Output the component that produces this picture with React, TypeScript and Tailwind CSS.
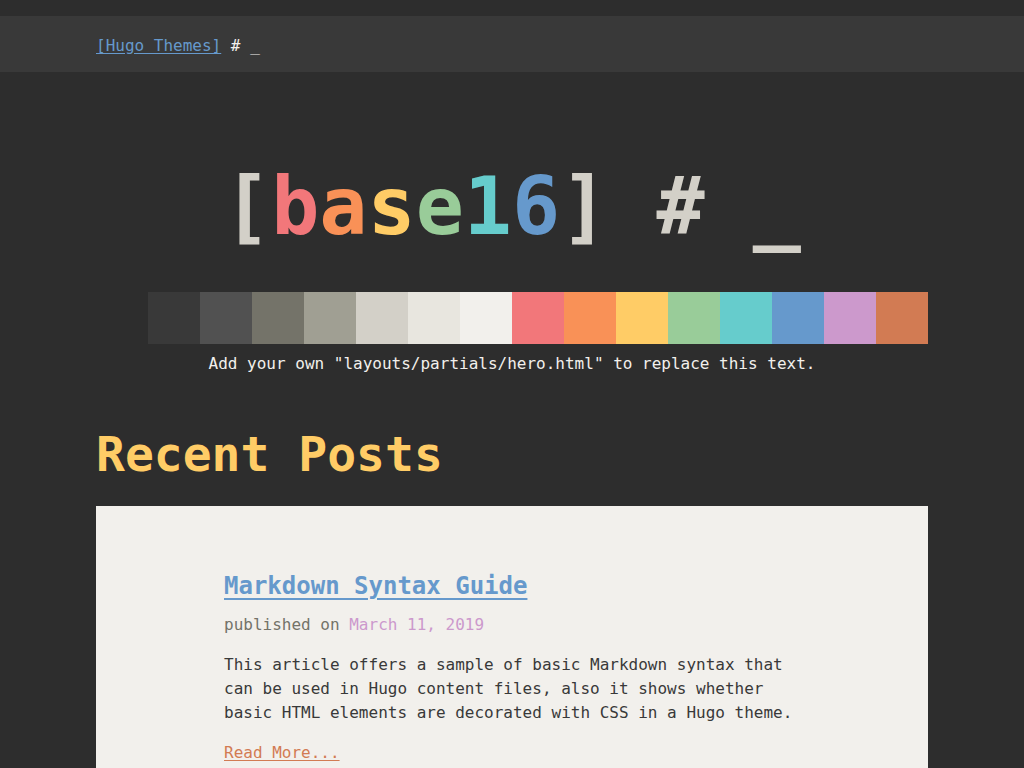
import React from "react";

const swatches = [
  "#2d2d2d", "#393939", "#515151", "#747369", "#a09f93", "#d3d0c8", "#e8e6df", "#f2f0ec",
  "#f2777a", "#f99157", "#ffcc66", "#99cc99", "#66cccc", "#6699cc", "#cc99cc", "#d27b53",
];

export default function App() {
  return (
    <div
      className="min-h-screen bg-[#2d2d2d] pt-4 text-[#f2f0ec]"
      style={{ fontFamily: '"DejaVu Sans Mono", "Liberation Mono", monospace' }}
    >
      <header className="h-14 bg-[#393939] pt-1">
        <div className="mx-auto flex h-full w-[832px] items-center text-base">
          <a href="#" className="text-[#6699cc] underline underline-offset-2">[Hugo Themes]</a>
          <span className="whitespace-pre text-[#f2f0ec]"> # _</span>
        </div>
      </header>

      <main className="mx-auto w-[832px]">
        <section className="pt-[95px]">
          <h1 className="whitespace-pre text-center text-[80px] font-bold leading-[80px] text-[#d3d0c8]">
            [<span className="text-[#f2777a]">b</span>
            <span className="text-[#f99157]">a</span>
            <span className="text-[#ffcc66]">s</span>
            <span className="text-[#99cc99]">e</span>
            <span className="text-[#66cccc]">1</span>
            <span className="text-[#6699cc]">6</span>] # _
          </h1>
          <div className="mt-[45px] flex h-[52px]">
            {swatches.map((c, i) => (
              <div key={i} className="h-full flex-1" style={{ backgroundColor: c }} />
            ))}
          </div>
          <p className="mt-2 text-center text-base leading-6 text-[#f2f0ec]">
            Add your own "layouts/partials/hero.html" to replace this text.
          </p>
        </section>

        <h2 className="mt-[50px] text-[48px] font-bold leading-[56px] text-[#ffcc66]">Recent Posts</h2>

        <div className="mt-[24px] bg-[#f2f0ec] px-32 pb-10 pt-16">
          <h3 className="text-2xl font-bold leading-8">
            <a href="#" className="text-[#6699cc] underline underline-offset-4">Markdown Syntax Guide</a>
          </h3>
          <p className="mt-[11px] text-base leading-6 text-[#747369]">
            published on <span className="text-[#cc99cc]">March 11, 2019</span>
          </p>
          <p className="mt-4 w-[576px] text-base leading-6 text-[#393939]">
            This article offers a sample of basic Markdown syntax that can be used in Hugo content files, also it shows whether basic HTML elements are decorated with CSS in a Hugo theme.
          </p>
          <p className="mt-4 text-base leading-6">
            <a href="#" className="text-[#d27b53] underline underline-offset-2">Read More...</a>
          </p>
        </div>
      </main>
    </div>
  );
}
